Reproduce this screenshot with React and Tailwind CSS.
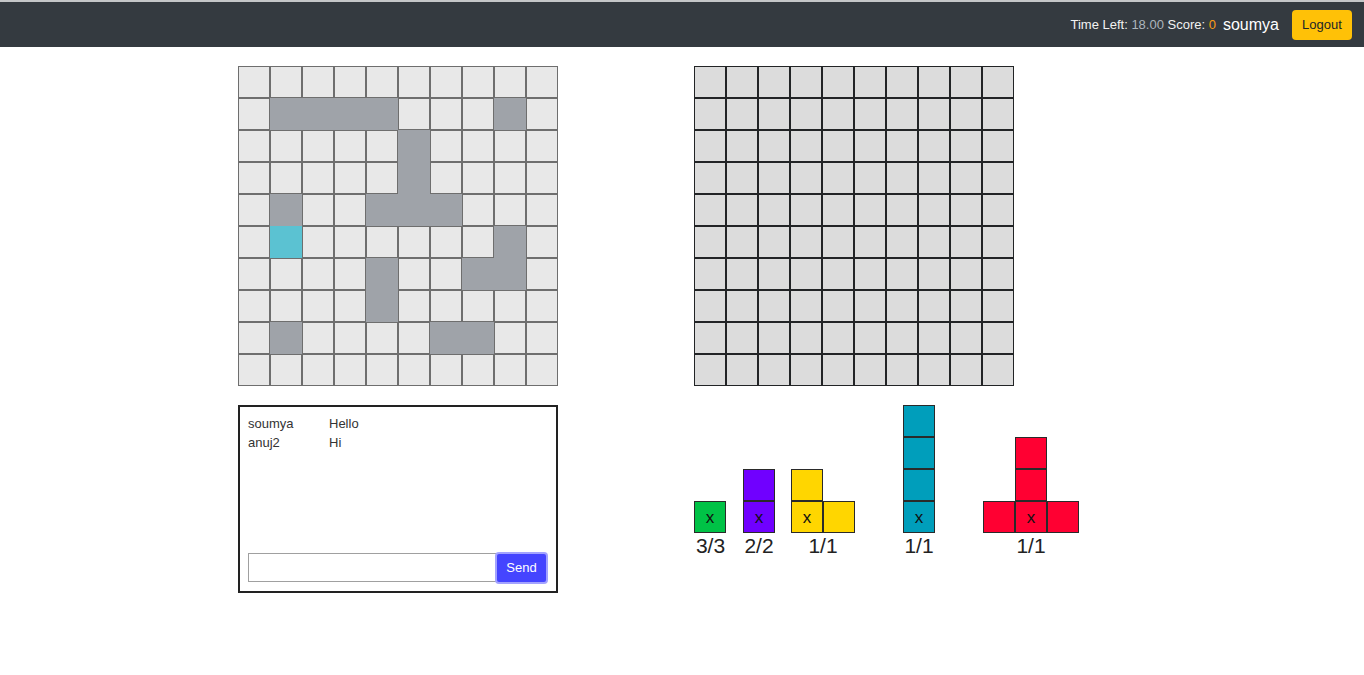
import React from 'react';

const SHIPS = new Set([
    '1-1', '1-2', '1-3', '1-4', '1-8',
    '2-5', '3-5',
    '4-1', '4-4', '4-5', '4-6',
    '5-8',
    '6-4', '6-7', '6-8',
    '7-4',
    '8-1', '8-6', '8-7',
]);
const HIT = new Set(['5-1']);

const pieces = [
    { size: 1, color: 'bg-[#00c246]', label: '3/3', cells: [[0, 0, true]] },
    { size: 2, color: 'bg-[#7000ff]', label: '2/2', cells: [[0, 0], [1, 0, true]] },
    { size: 2, color: 'bg-[#ffd600]', label: '1/1', cells: [[0, 0], [1, 0, true], [1, 1]] },
    { size: 4, color: 'bg-[#009ebb]', label: '1/1', cells: [[0, 0], [1, 0], [2, 0], [3, 0, true]] },
    { size: 3, color: 'bg-[#ff0032]', label: '1/1', cells: [[0, 1], [1, 1], [2, 0], [2, 1, true], [2, 2]] },
];

const range = [0, 1, 2, 3, 4, 5, 6, 7, 8, 9];

const MyBoard = () => (
    <div className="grid grid-cols-[repeat(10,32px)] w-[320px]">
        {range.map((r) =>
            range.map((c) => {
                const key = `${r}-${c}`;
                let cls = 'bg-[#e8e8e8] border-[#6e6e6e]';
                if (SHIPS.has(key)) cls = 'bg-[#9fa3a9] border-[#9fa3a9]';
                if (HIT.has(key)) cls = 'bg-[#5bc2d2] border-[#5bc2d2]';
                return <div key={key} className={`h-8 w-8 border ${cls}`} />;
            })
        )}
    </div>
);

const EnemyBoard = () => (
    <div className="grid grid-cols-[repeat(10,32px)] w-[320px]">
        {range.map((r) =>
            range.map((c) => (
                <div key={`${r}-${c}`} className="h-8 w-8 border border-[#222426] bg-[#dcdcdc]" />
            ))
        )}
    </div>
);

const Piece = ({ piece }) => {
    const rows = Math.max(...piece.cells.map((c) => c[0])) + 1;
    const cols = Math.max(...piece.cells.map((c) => c[1])) + 1;
    const grid = [];
    for (let r = 0; r < rows; r++) {
        for (let c = 0; c < cols; c++) {
            const cell = piece.cells.find((x) => x[0] === r && x[1] === c);
            grid.push(
                cell ? (
                    <div key={`${r}-${c}`} className={`h-8 w-8 border border-[#2a2a2a] ${piece.color} flex items-center justify-center text-[17px] leading-none text-[#111]`}>
                        {cell[2] ? 'x' : ''}
                    </div>
                ) : (
                    <div key={`${r}-${c}`} className="h-8 w-8" />
                )
            );
        }
    }
    const width = { 1: 'w-[33px] items-start', 2: 'w-[64px] items-center', 3: 'w-[96px] items-center', 4: 'w-[128px] items-center' }[piece.size];
    const colsCls = { 1: 'grid-cols-[32px]', 2: 'grid-cols-[32px_32px]', 3: 'grid-cols-[32px_32px_32px]' }[cols];
    return (
        <div className={`${width} flex flex-col`}>
            <div className={`grid ${colsCls}`}>{grid}</div>
            <div className="text-[21px] leading-[24px] text-[#222] mt-[1px] w-8 text-center self-center">
                <span className="whitespace-nowrap">{piece.label}</span>
            </div>
        </div>
    );
};

const App = () => {
    return (
        <div className="min-h-screen bg-white font-['Liberation_Sans',Arial,sans-serif]">
            <nav className="h-[47px] bg-[#343a40] border-t-2 border-t-[#c4c6c8] flex items-center justify-end pr-3">
                <span className="text-[13px] text-[#f2f2f2]">Time Left: <span className="text-[#adb5bd]">18.00</span> Score: <span className="text-[#fd9c14]">0</span></span>
                <span className="text-[16px] text-white ml-[7px]">soumya</span>
                <button className="ml-[13px] h-[30px] w-[60px] rounded bg-[#ffc107] text-[13px] text-[#212529]">Logout</button>
            </nav>

            <div className="flex pt-[19px] pl-[238px]">
                <div className="flex flex-col gap-[19px]">
                    <MyBoard />
                    <div className="w-[320px] h-[188px] border-2 border-[#222] px-2 pt-[7px] pb-[7px] flex flex-col">
                        <div className="flex-1 text-[13px] leading-[19px] text-[#333]">
                            <div className="flex"><span className="w-[81px]">soumya</span><span>Hello</span></div>
                            <div className="flex"><span className="w-[81px]">anuj2</span><span>Hi</span></div>
                        </div>
                        <div className="flex items-start">
                            <input className="mt-[1px] h-[29px] w-[249px] border border-[#a0a0a0] outline-none" />
                            <button className="h-[32px] w-[53px] -ml-[2px] rounded bg-[#4545ff] border-2 border-[#a3a3ff] text-[13px] text-white">Send</button>
                        </div>
                    </div>
                </div>

                <div className="flex flex-col ml-[136px] gap-[19px]">
                    <EnemyBoard />
                    <div className="flex items-end">
                        {pieces.map((p, i) => (
                            <Piece key={i} piece={p} />
                        ))}
                    </div>
                </div>
            </div>
        </div>
    );
};

export default App;
